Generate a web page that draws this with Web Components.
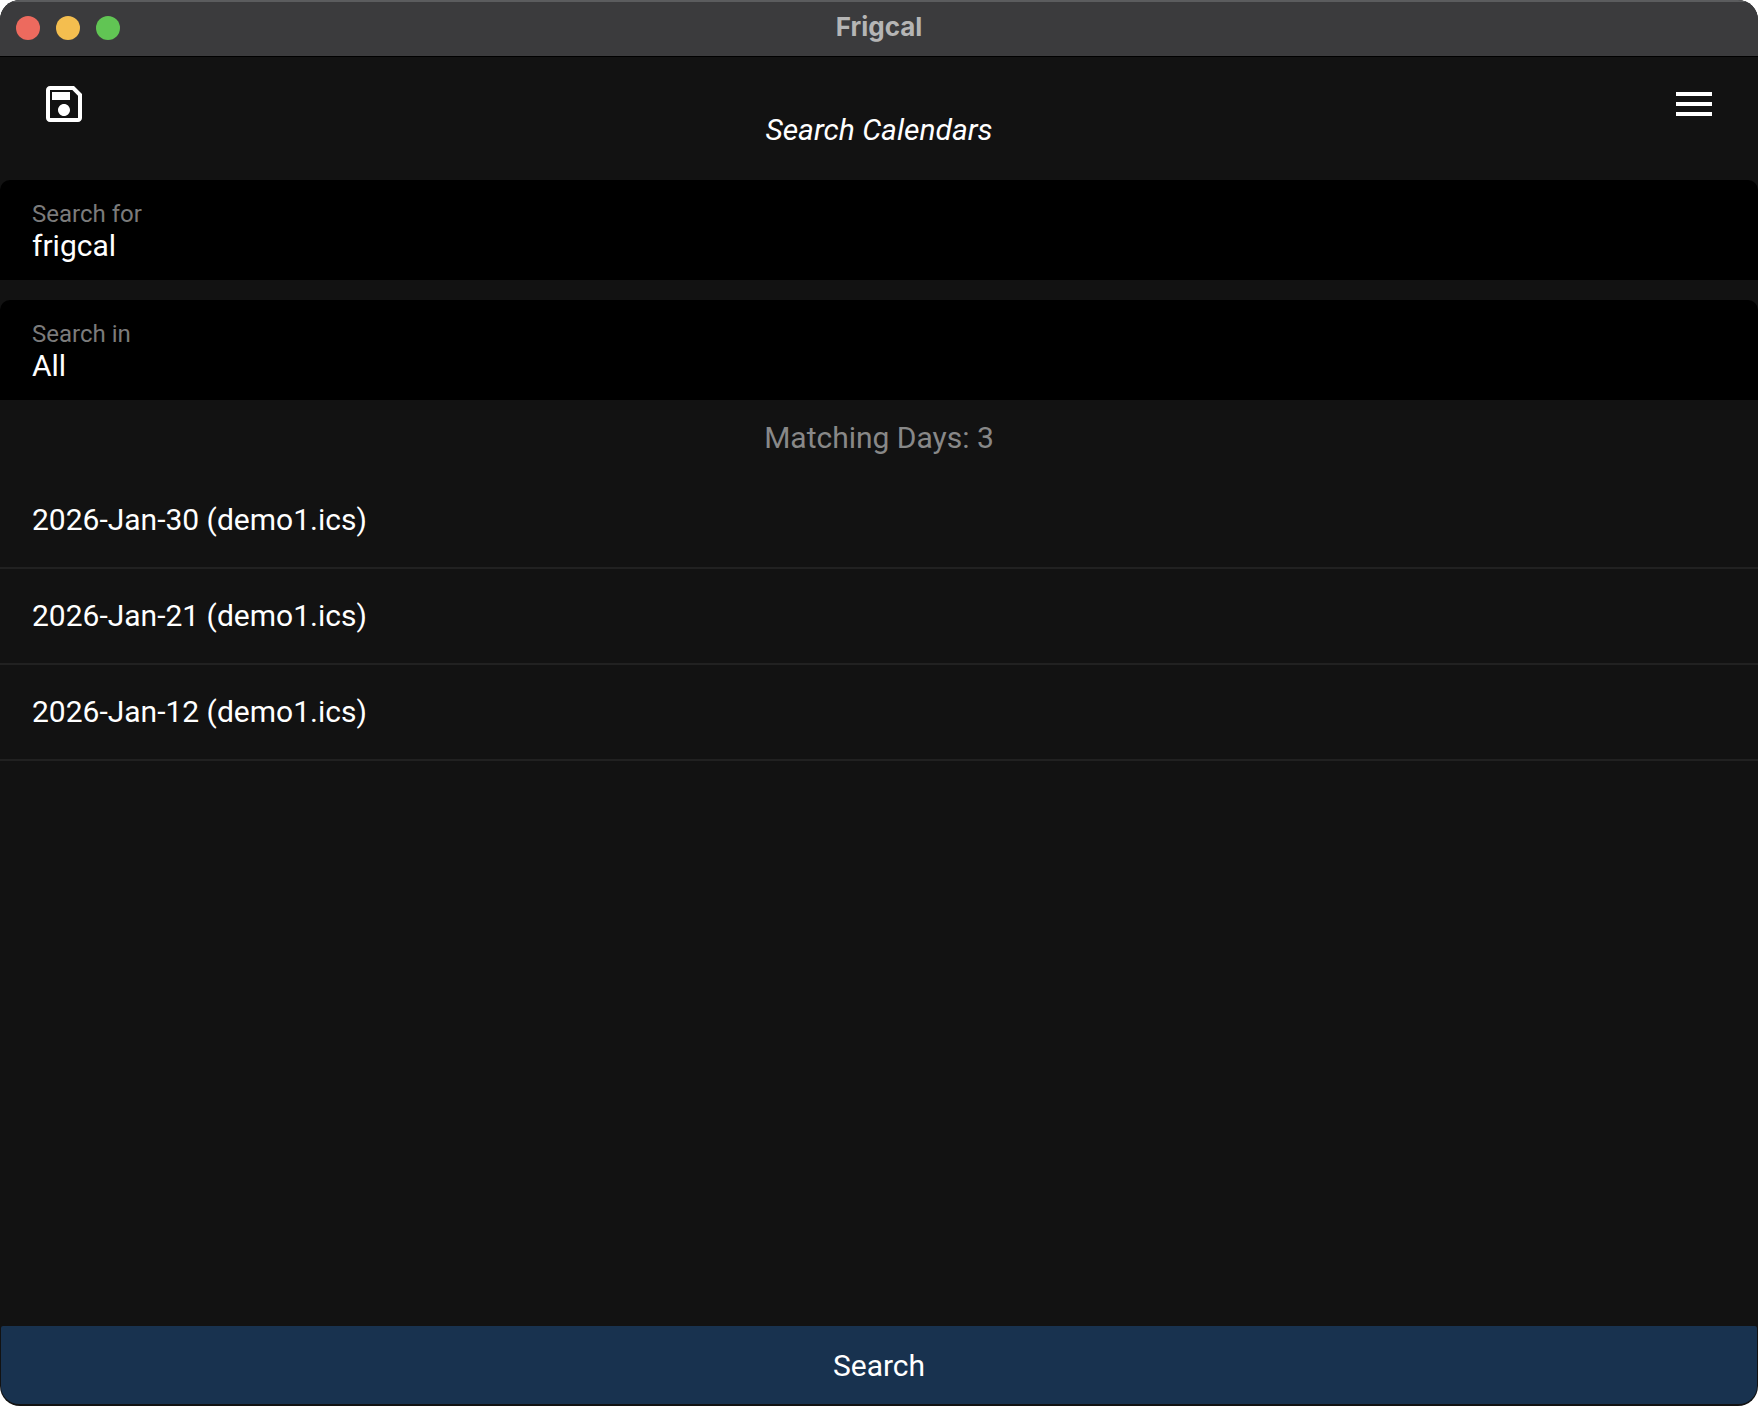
<!DOCTYPE html>
<html lang="en">
<head>
<meta charset="utf-8">
<title>Frigcal</title>
<style>
  body { margin: 0; background: #fff; }
</style>
</head>
<body>
<app-window>
  <title-bar slot="title">Frigcal</title-bar>
  <app-header>Search Calendars</app-header>
  <search-form></search-form>
  <result-list></result-list>
  <primary-action slot="footer">Search</primary-action>
</app-window>

<script>
function define(name, html, setup) {
  const template = document.createElement('template');
  template.innerHTML = html;
  customElements.define(name, class extends HTMLElement {
    constructor() {
      super();
      this.attachShadow({ mode: 'open' }).append(template.content.cloneNode(true));
    }
    connectedCallback() {
      if (setup) setup(this, this.shadowRoot);
    }
  });
}

define('app-window', `
  <style>
    :host {
      display: flex; flex-direction: column; box-sizing: border-box; min-height: 100vh;
      overflow: hidden; border-radius: 20px; background: #121212; color: #fff;
      font: 30px/36px Roboto, sans-serif;
    }
    main { flex: 1; display: flex; flex-direction: column; }
  </style>
  <slot name="title"></slot>
  <main><slot></slot></main>
  <slot name="footer"></slot>
`);

define('title-bar', `
  <style>
    :host {
      display: grid; grid-template-columns: 1fr auto 1fr; align-items: center;
      height: 56px; padding: 0 16px; background: #3b3b3d; color: #b5b5b5;
      box-shadow: inset 0 2px #5b5c5e; font: bold 26px/32px Inter, sans-serif;
    }
    .lights { display: flex; gap: 16px; }
    i { width: 24px; height: 24px; border-radius: 50%; }
    .close { background: #ed6a5e; }
    .minimise { background: #f4be4f; }
    .zoom { background: #61c554; }
    .name { padding-bottom: 2px; }
  </style>
  <div class="lights"><i class="close"></i><i class="minimise"></i><i class="zoom"></i></div>
  <div class="name"><slot></slot></div>
`);

define('icon-button', `
  <style>
    :host { display: block; }
    button { display: block; padding: 0; border: 0; background: none; color: inherit; }
    svg { display: block; width: 48px; height: 48px; fill: currentColor; }
  </style>
  <button type="button"><svg viewBox="0 0 24 24" aria-hidden="true"><path/></svg></button>
`, (host, root) => {
  const paths = {
    save: 'M17 3H5C3.89 3 3 3.9 3 5V19C3 20.1 3.89 21 5 21H19C20.1 21 21 20.1 21 19V7L17 3M19 19H5V5H16.17L19 7.83V19M12 12C10.34 12 9 13.34 9 15S10.34 18 12 18 15 16.66 15 15 13.66 12 12 12M6 6H15V10H6V6Z',
    menu: 'M3 6H21V8H3V6M3 11H21V13H3V11M3 16H21V18H3V16Z'
  };
  root.querySelector('path').setAttribute('d', paths[host.getAttribute('icon')]);
  root.querySelector('button').setAttribute('aria-label', host.getAttribute('label'));
});

define('app-header', `
  <style>
    :host {
      display: flex; justify-content: space-between; align-items: flex-start;
      padding: 23px 40px 32px; border-top: 1px solid #000;
    }
    h1 { margin: 32px 0 0; font: inherit; font-style: italic; }
  </style>
  <icon-button icon="save" label="Save"></icon-button>
  <h1><slot></slot></h1>
  <icon-button icon="menu" label="Menu"></icon-button>
`);

define('search-form', `
  <style>
    :host { display: flex; flex-direction: column; gap: 20px; }
    .field {
      display: flex; flex-direction: column; padding: 20px 32px 16px;
      background: #000; border-radius: 10px 10px 0 0;
    }
    label { font-size: 24px; line-height: 28px; color: #7b7b7b; }
    input, select {
      appearance: none; box-sizing: border-box; width: 100%; height: 36px; margin: 0; padding: 0;
      border: 0; border-radius: 0; outline: 0; background: none; color: inherit; font: inherit;
    }
    option { background: #000; }
  </style>
  <div class="field">
    <label for="term">Search for</label>
    <input id="term" type="text" value="frigcal">
  </div>
  <div class="field">
    <label for="scope">Search in</label>
    <select id="scope"><option>All</option></select>
  </div>
`);

define('result-list', `
  <style>
    :host { display: block; }
    p { margin: 0; padding: 20px 32px 17px; text-align: center; color: #888; }
    ul { margin: 0; padding: 0; list-style: none; }
    li { border-bottom: 2px solid #212121; }
    button {
      display: block; width: 100%; padding: 29px 32px; border: 0; background: none;
      color: inherit; font: inherit; text-align: left;
    }
  </style>
  <p></p>
  <ul></ul>
`, (host, root) => {
  const days = ['2026-Jan-30', '2026-Jan-21', '2026-Jan-12'];
  root.querySelector('p').textContent = 'Matching Days: ' + days.length;
  root.querySelector('ul').innerHTML = days
    .map(day => '<li><button type="button">' + day + ' (demo1.ics)</button></li>').join('');
});

define('primary-action', `
  <style>
    :host { display: block; padding: 0 1px 2px; }
    button {
      display: block; width: 100%; padding: 22px 32px 20px; border: 0;
      border-radius: 2px 2px 18px 18px; background: #18324f; color: inherit; font: inherit;
    }
  </style>
  <button type="button"><slot></slot></button>
`);
</script>
</body>
</html>
